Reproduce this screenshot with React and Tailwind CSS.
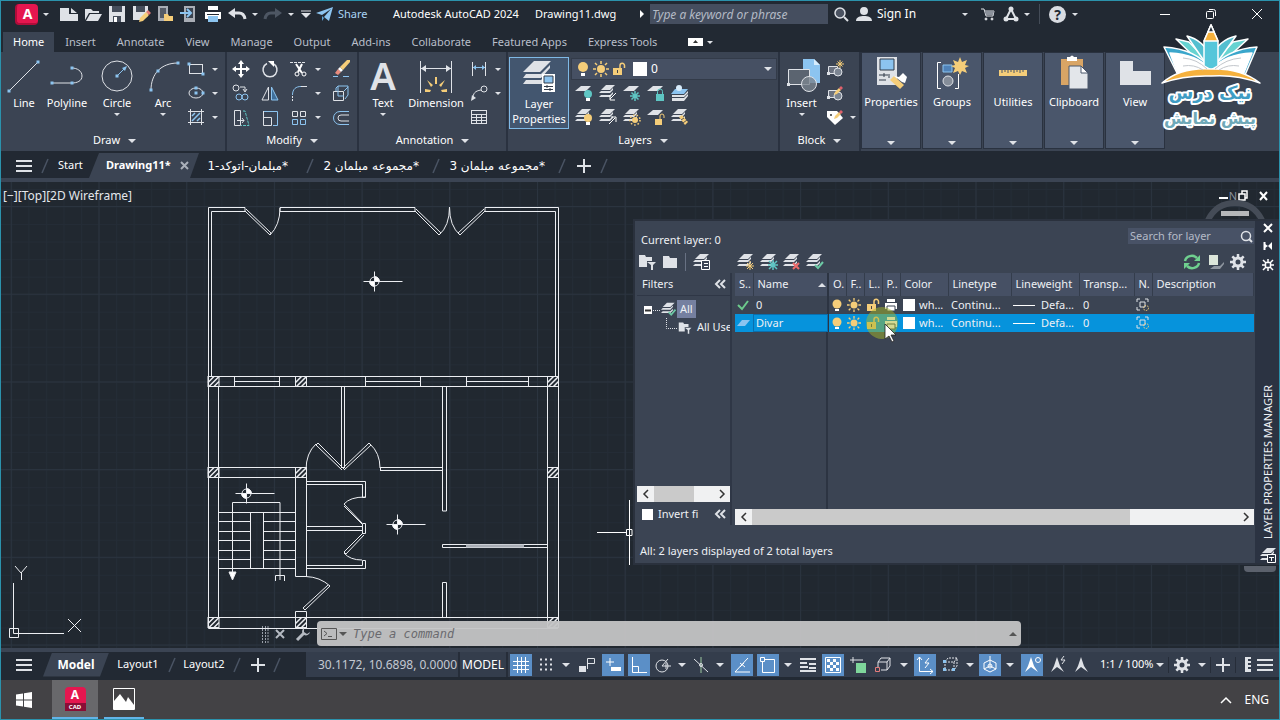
import React, { useState } from "react";

const LIGHT = "#dfe2e7";
const BLUE = "#8cc4f0";
const GOLD = "#f5cd79";
const TEAL = "#5fc6c4";

function Icon({ w = 20, h = w, children, className = "" }) {
  return (
    <svg
      width={w}
      height={h}
      viewBox={`0 0 ${w} ${h}`}
      fill="none"
      stroke={LIGHT}
      className={`shrink-0 ${className}`}
      aria-hidden="true"
    >
      {children}
    </svg>
  );
}

function Caret({ w = 6 }) {
  return (
    <Icon w={w} h={w / 2}>
      <path d={`M0 0H${w}L${w / 2} ${w / 2}Z`} fill={LIGHT} stroke="none" />
    </Icon>
  );
}

function CaretButton({ label, className = "w-3" }) {
  return (
    <button type="button" aria-label={label} className={`flex h-6 items-center justify-center ${className}`}>
      <Caret />
    </button>
  );
}

function AutocadLogo() {
  return (
    <div className="h-[21px] w-[23px] rounded-sm border-b-2 border-l-2 border-[#b00d3a] bg-[#e5164f] text-center text-sm leading-[19px] font-bold text-white">
      A
    </div>
  );
}

/* ---------- title bar ---------- */

const quickIcons = [
  ["New", <path d="M1 4H10V10H19V17H1ZM12 4L18 9H12Z" fill={LIGHT} stroke="none" />],
  ["Open", <path d="M2 5H8L10 7H16V9H6L2 16ZM7 10H19L15 17H3Z" fill={LIGHT} stroke="none" />],
  [
    "Save",
    <g stroke="none">
      <path d="M2 2H18V18H2Z" fill={LIGHT} />
      <path d="M5 2H15V8H5ZM6 12H14V18H6Z" fill="#454d5b" />
      <path d="M7 13H10V18H7Z" fill="#fff" />
    </g>,
  ],
  [
    "Save As",
    <g stroke="none">
      <path d="M2 2H17V12L12 16H2Z" fill={LIGHT} />
      <path d="M5 2H14V8H5Z" fill="#454d5b" />
      <path d="M8 18L9 14L15 8L18 11L12 17Z" fill={GOLD} />
      <path d="M15 8L17 6L20 9L18 11Z" fill="#e07a76" />
    </g>,
  ],
  [
    "Open from Web & Mobile",
    <g stroke="none">
      <path d="M3 2H13V17H3Z" fill="#a9adb5" />
      <path d="M5 4H11V14H5Z" fill="#555b66" />
      <path d="M9 10H13L14 12H18V17H9Z" fill={GOLD} />
    </g>,
  ],
  [
    "Save to Web & Mobile",
    <g>
      <path d="M5 2H16V18H5Z" fill="#a9adb5" stroke="none" />
      <path d="M7 4H14V14H7Z" fill="#39424f" stroke="none" />
      <path d="M1 9H11M8 5L12 9L8 13" stroke={BLUE} strokeWidth="2" />
    </g>,
  ],
  [
    "Plot",
    <g stroke="none">
      <path d="M5 2H15V6H5ZM2 8H18V15H2Z" fill="#fff" />
      <path d="M5 12H15V18H5Z" fill={BLUE} />
      <path d="M4 10H16V11H4Z" fill="#222933" />
    </g>,
  ],
  [
    "Undo",
    <g>
      <path d="M6 9H12Q17 9 18 15" strokeWidth="3" />
      <path d="M1 9L8 4V14Z" fill={LIGHT} stroke="none" />
    </g>,
  ],
];

function TitleBar() {
  return (
    <header className="flex h-[31px] items-center bg-[#222933] pb-[5px] pl-[14px] text-white">
      <AutocadLogo />
      <CaretButton label="Application menu" className="mr-[3px] w-4" />
      {quickIcons.map(([label, art]) => (
        <button key={label} type="button" aria-label={label} className="flex w-6 justify-center">
          <Icon>{art}</Icon>
        </button>
      ))}
      <CaretButton label="Undo list" />
      <button type="button" aria-label="Redo" className="flex w-6 justify-center">
        <Icon>
          <path d="M14 9H8Q3 9 2 15" stroke="#4d5663" strokeWidth="3" />
          <path d="M19 9L12 4V14Z" fill="#4d5663" stroke="none" />
        </Icon>
      </button>
      <CaretButton label="Redo list" />
      <button type="button" aria-label="Customize toolbar" className="flex w-[18px] justify-center">
        <Icon w={10} h={8}>
          <path d="M0 1H10" />
          <path d="M0 3H10L5 8Z" fill={LIGHT} stroke="none" />
        </Icon>
      </button>
      <button type="button" className="flex w-[54px] items-center gap-[3px] text-[#a9d4f5]">
        <Icon>
          <path d="M1 9L18 3L14 17L9 13L16 5L7 11Z" fill={BLUE} stroke="none" />
          <path d="M7 12L9 14L7 17Z" fill="#5da3d6" stroke="none" />
        </Icon>
        Share
      </button>
      <h1 className="ml-6 flex w-[247px] gap-4 whitespace-nowrap">
        <span>Autodesk AutoCAD 2024</span>
        <span>Drawing11.dwg</span>
      </h1>
      <Icon w={5} h={8} className="mr-[5px]">
        <path d="M0 0L4 4L0 8Z" fill="#fff" stroke="none" />
      </Icon>
      <input
        aria-label="Search help"
        placeholder="Type a keyword or phrase"
        className="h-5 w-[178px] bg-[#454e5f] px-[2px] text-xs italic outline-none placeholder:text-[#b4bac5]"
      />
      <button type="button" aria-label="Search" className="ml-[5px]">
        <Icon w={16}>
          <circle cx="7" cy="7" r="5" strokeWidth="1.500" fill="#4a5261" />
          <path d="M11 11L15 15" strokeWidth="2" />
        </Icon>
      </button>
      <button type="button" className="ml-[7px] flex w-[101px] items-center gap-[5px] text-xs">
        <Icon w={16}>
          <path d="M8 1C11 1 12 3 12 5C12 8 10 9 8 9C6 9 4 8 4 5C4 3 5 1 8 1ZM0 15C0 11 4 10 8 10C12 10 16 11 16 15Z" fill={LIGHT} stroke="none" />
        </Icon>
        Sign In
      </button>
      <CaretButton label="Account menu" className="w-4" />
      <button type="button" aria-label="App store" className="ml-2">
        <Icon w={14}>
          <path d="M0 2H3L5 9H12L13 4H4" />
          <path d="M4 4H13L12 8H5Z" fill="#8c929c" stroke="none" />
          <circle cx="5" cy="12" r="1" fill={LIGHT} />
          <circle cx="11" cy="12" r="1" fill={LIGHT} />
        </Icon>
      </button>
      <button type="button" aria-label="Autodesk apps" className="ml-2">
        <Icon w={16}>
          <path d="M8 3L3 13H13Z" strokeWidth="2" />
          <circle cx="8" cy="3" r="2.500" fill={LIGHT} stroke="none" />
          <circle cx="3" cy="13" r="2.500" fill={LIGHT} stroke="none" />
          <circle cx="13" cy="13" r="2.500" fill={LIGHT} stroke="none" />
        </Icon>
      </button>
      <CaretButton label="Apps menu" className="w-4" />
      <div className="mx-1 h-5 border-l border-[#444c58]" />
      <button type="button" aria-label="Help" className="ml-[5px] size-[17px] rounded-full bg-[#d9dce2] text-sm leading-[17px] font-bold text-[#222933]">
        ?
      </button>
      <CaretButton label="Help menu" className="ml-px w-4" />
      <div className="ml-auto flex gap-[34px] pr-4">
        <button type="button" aria-label="Minimize">
          <Icon w={12}><path d="M1 6.500H11" stroke="#fff" /></Icon>
        </button>
        <button type="button" aria-label="Restore">
          <Icon w={12}>
            <rect x="1.500" y="3.500" width="7" height="7" rx="1" stroke="#fff" />
            <path d="M4 1.500H8.500Q10.500 1.500 10.500 3.500V8" stroke="#fff" />
          </Icon>
        </button>
        <button type="button" aria-label="Close">
          <Icon w={12}><path d="M1 1L11 11M11 1L1 11" stroke="#fff" /></Icon>
        </button>
      </div>
    </header>
  );
}

/* ---------- ribbon ---------- */

const ribbonTabs = [
  "Home",
  "Insert",
  "Annotate",
  "View",
  "Manage",
  "Output",
  "Add-ins",
  "Collaborate",
  "Featured Apps",
  "Express Tools",
];

function RibbonTabs() {
  return (
    <nav className="flex h-5 items-center gap-px bg-[#222933] pl-[2px]">
      {ribbonTabs.map((tab, index) => (
        <button
          key={tab}
          type="button"
          className={`h-full px-[10px] whitespace-nowrap ${
            index === 0 ? "bg-[#3b4453] text-white" : "text-[#b9bfca]"
          }`}
        >
          {tab}
        </button>
      ))}
      <button type="button" aria-label="Minimize ribbon" className="ml-5 flex items-center gap-1">
        <Icon w={15} h={8}>
          <path d="M0 0H15V8H0Z" fill="#fff" stroke="none" />
          <path d="M5 5H10L7.500 2Z" fill="#333" stroke="none" />
        </Icon>
        <Caret w={6} />
      </button>
    </nav>
  );
}

function Panel({ title, children, className = "" }) {
  return (
    <section className={`flex shrink-0 flex-col border-r-2 border-[#2a3240] ${className}`}>
      <div className="flex h-[78px] px-px pt-[5px]">{children}</div>
      <button type="button" className="flex h-[21px] items-center justify-center gap-2 text-white">
        {title}
        <Caret w={8} />
      </button>
    </section>
  );
}

function BigButton({ label, art, caret, className }) {
  return (
    <button type="button" className={`flex flex-col items-center text-white ${className}`}>
      <Icon w={38} className="overflow-visible">{art}</Icon>
      <span className="leading-4">{label}</span>
      {caret && (
        <span className="mt-[2px] flex">
          <Caret w={6} />
        </span>
      )}
    </button>
  );
}

function SmallButton({ label, art }) {
  return (
    <button type="button" aria-label={label} className="flex h-6 w-[26px] items-center justify-center">
      <Icon w={18}>{art}</Icon>
    </button>
  );
}

function Dot({ x, y }) {
  return <rect x={x - 1.5} y={y - 1.5} width="3" height="3" fill={BLUE} stroke="none" />;
}

const drawBig = [
  ["Line", "w-[38px]", false, <g><path d="M4 34L33 5" /><Dot x={4} y={34} /><Dot x={33} y={5} /></g>],
  [
    "Polyline",
    "w-12",
    false,
    <g><path d="M4 26H24M24 11C29 11 34 14 34 19C34 24 29 26 24 26" /><Dot x={4} y={26} /><Dot x={24} y={26} /><Dot x={24} y={11} /></g>,
  ],
  [
    "Circle",
    "w-[52px]",
    true,
    <g><circle cx="19" cy="19" r="15" /><path d="M19 19L27 11" stroke={BLUE} /><Dot x={19} y={19} /><path d="M29 9L24 11L27 14Z" fill={BLUE} stroke="none" /></g>,
  ],
  [
    "Arc",
    "w-10",
    true,
    <g><path d="M7 33C7 17 17 6 34 6" /><Dot x={7} y={33} /><Dot x={14} y={14} /><Dot x={34} y={6} /></g>,
  ],
];

const starArt = <path d="M14 0V8M10 4H18M11.500 1.500L16.500 6.500M16.500 1.500L11.500 6.500" stroke={GOLD} />;
const pencilArt = (
  <g stroke="none">
    <path d="M8 11L9 8L13 4L15 6L11 10Z" fill={GOLD} />
    <path d="M13 4L15 2L17 4L15 6Z" fill="#e0606c" />
  </g>
);
const blockArt = (
  <g>
    <path d="M2.500 6.500H11.500V13.500H2.500Z" fill="#6b7280" />
    <circle cx="12" cy="12" r="4" fill="#7c8592" />
    <path d="M1 12H4V15H1Z" fill={LIGHT} stroke="none" />
  </g>
);

const drawSmall = [
  ["Rectangle", <g><rect x="2.500" y="4.500" width="13" height="9" /><Dot x={2} y={4} /><Dot x={16} y={14} /></g>],
  ["Ellipse", <g><ellipse cx="9" cy="9" rx="7" ry="5" /><Dot x={9} y={9} /><Dot x={9} y={4} /><Dot x={16} y={9} /></g>],
  [
    "Hatch",
    <g><path d="M3.500 1V17M14.500 1V17M1 3.500H17M1 14.500H17" /><path d="M5 8L8 5M5 13L13 5M10 13L13 10" stroke={BLUE} strokeWidth="1.500" /></g>,
  ],
];

const modifyTools = [
  ["Move", <g><path d="M9 2V16M2 9H16" strokeWidth="2" stroke="#fff" /><path d="M9 0L12 4H6ZM9 18L12 14H6ZM0 9L4 6V12ZM18 9L14 6V12Z" fill="#fff" stroke="none" /></g>],
  ["Rotate", <g><path d="M12 3.500A7 7 0 1 1 6 3.500" strokeWidth="1.500" /><path d="M7 1H13V7Z" fill="#fff" stroke="none" /></g>],
  ["Trim", <g><path d="M0 2.500H16" strokeDasharray="3 1" /><path d="M6 4L12 13M12 4L8 12" strokeWidth="2" stroke="#fff" /><circle cx="7" cy="14" r="2" stroke="#fff" /><circle cx="14" cy="14" r="2" stroke="#fff" /></g>, true],
  ["Erase", <g><path d="M1 16.500H6M11 16.500H17" stroke={BLUE} /><path d="M3 13L6 9L9 12L6 15Z" fill="#e98c7e" stroke="none" /><path d="M6 9L8 7L11 10L9 12Z" fill="#fff" stroke="none" /><path d="M8 7L15 0H18V2L11 10Z" fill={GOLD} stroke="none" /></g>],
  ["Copy", <g><circle cx="4" cy="4" r="3" /><path d="M8 3H13V7M11 5L13 8L15 5" /><circle cx="7" cy="13" r="3" stroke={BLUE} /><circle cx="13" cy="13" r="3" stroke={BLUE} /></g>],
  ["Mirror", <g><path d="M7.500 3V16H1Z" /><path d="M10.500 3V16H17Z" fill="#3f6f9b" stroke={BLUE} /></g>],
  ["Fillet", <g><path d="M2.500 17V11" strokeDasharray="2 1" /><path d="M2.500 11C2.500 5 6 2.500 11 2.500" stroke={BLUE} /><path d="M11 2.500H17" /></g>, true],
  ["Explode", <g><path d="M1.500 7.500H11.500V16.500H1.500Z" /><path d="M4 7V4L6 2H16V11L13 15M6 2V12H12M12 7L16 3" stroke={BLUE} /></g>],
  ["Stretch", <g><path d="M2.500 1.500H8.500V16.500H2.500ZM5 11.500H12M10 9L12 11.500L10 14" /><path d="M11 2H13L17 16.500H9" stroke={TEAL} strokeDasharray="3 1" /></g>],
  ["Scale", <g><path d="M2 2.500H16.500V16.500H12" stroke={BLUE} /><path d="M2.500 2V16.500H10.500V8.500H2.500" /></g>],
  ["Array", <g><path d="M2.500 2.500H7.500V7.500H2.500ZM10.500 2.500H15.500V7.500H10.500Z" /><path d="M2.500 10.500H7.500V15.500H2.500ZM10.500 10.500H15.500V15.500H10.500Z" stroke={BLUE} /></g>, true],
  ["Offset", <g><path d="M17 2.500H8A6.500 6.500 0 0 0 8 15.500H17" stroke={BLUE} /><path d="M17 6H9A3 3 0 0 0 9 12H17" /></g>],
];

const annotationSmall = [
  ["Linear", <g><path d="M2.500 2V16M15.500 2V16" /><path d="M3 7.500H15" stroke={BLUE} /><path d="M3 7.500L6 5V10ZM15 7.500L12 5V10Z" fill={BLUE} stroke="none" /></g>, true],
  ["Leader", <g><path d="M3 15C3 9 5 7 11 6" /><circle cx="14" cy="5" r="3" /><path d="M1 17L2 11L6 14Z" fill={LIGHT} stroke="none" /></g>, true],
  ["Table", <g><rect x="1.500" y="2.500" width="15" height="13" /><path d="M1 6.500H17M1 9.500H17M1 12.500H17M6.500 6V16M11.500 6V16" /></g>],
];

function stack(color = LIGHT) {
  return (
    <g fill={color} stroke="none">
      <path d="M7 1H16L11 6H2Z" />
      <path d="M2 7H11L14 4V6L11 9H0ZM2 11H11L14 8V10L11 13H0Z" />
    </g>
  );
}

const sheet = <path d="M6 2H16L11 7H0Z" fill={LIGHT} stroke="none" />;
const bulb = (color) => (
  <g stroke="none">
    <circle cx="13" cy="10" r="4" fill={color} />
    <path d="M11 14H15V17H11Z" fill="#fff" />
  </g>
);

const layerTools = [
  ["Off", <g>{sheet}{bulb(TEAL)}</g>],
  ["Isolate", <g>{stack()}<path d="M17 9L11 15M11 11V16H16" stroke="#fff" /></g>],
  ["Freeze", <g>{sheet}<path d="M12 7V17M7 12H17M8.500 8.500L15.500 15.500M15.500 8.500L8.500 15.500" stroke={TEAL} strokeWidth="1.500" /></g>],
  ["Lock", <g>{sheet}<path d="M9 10H17V17H9Z" fill={TEAL} stroke="none" /><path d="M10.500 10V7.500A2.500 2.500 0 0 1 15.500 7.500V10" stroke={TEAL} /></g>],
  ["Make Current", <g stroke="none"><path d="M4 5H17L13 10H0Z" fill={BLUE} /><path d="M1 11H13L17 7V9L13 13H1ZM1 14H13L17 10V12L13 17H1Z" fill={LIGHT} /><circle cx="8" cy="4" r="3" fill="#d8ecfb" /></g>],
  ["Turn All On", <g>{stack()}{bulb(GOLD)}</g>],
  ["Unisolate", <g>{stack()}<path d="M10 16L16 10M12 9H17V14" stroke="#fff" /></g>],
  ["Thaw All", <g>{stack()}<circle cx="12" cy="12" r="3" fill={GOLD} stroke="none" /><circle cx="12" cy="12" r="5" stroke={GOLD} strokeDasharray="1.500 2" strokeWidth="1.500" /></g>],
  ["Unlock", <g>{sheet}<path d="M8 11H15V17H8Z" fill={GOLD} stroke="none" /><path d="M13 11V8A2 2 0 0 1 17 8V10" stroke={GOLD} /></g>],
  ["Match Layer", <g>{stack()}<path d="M8 9L11 7L17 14L14 17Z" fill={GOLD} stroke="none" /><path d="M10 12L13 10M12 15L16 12" stroke="#555" /></g>],
];

const blockSmall = [
  ["Create", <g>{blockArt}{starArt}</g>],
  ["Edit", <g>{blockArt}{pencilArt}</g>],
  ["Edit Attributes", <g><path d="M1 3H11L17 10L9 17L1 9Z" fill="#fff" stroke="none" /><circle cx="5" cy="7" r="1" fill="#333" stroke="none" />{pencilArt}</g>, true],
];

const collapsedPanels = [
  [
    "Properties",
    <g stroke="none">
      <path d="M5 3H25V31H5Z" fill={LIGHT} />
      <path d="M8 5H22V16H8Z" fill={BLUE} stroke="#333c4a" />
      <path d="M7 21H16M7 26H14M12 19V23M17 20V24" stroke="#333c4a" />
      <path d="M18 26L22 22L32 31L28 35Z" fill={GOLD} />
      <path d="M22 22L27 23L31 19L35 23L33 29L30 28Z" fill="#fff" />
    </g>,
  ],
  [
    "Groups",
    <g>
      <path d="M8 8.500H4.500V34.500H8M22 34.500H25.500V20" stroke="#fff" />
      <path d="M10 11H19V18H10Z" fill="#4f82b8" stroke={BLUE} />
      <circle cx="15" cy="27" r="5" fill="#858d99" />
      <path d="M27 3L29 8L34 6L32 11L36 12L32 14L34 19L29 17L27 21L25 17L20 19L22 14L18 12L22 11L20 6L25 8Z" fill={GOLD} stroke="none" />
    </g>,
  ],
  [
    "Utilities",
    <g stroke="none">
      <path d="M5 16H33V22H5Z" fill={GOLD} />
      <path d="M8 16V19M11 16V18M14 16V19M17 16V18M20 16V19M23 16V18M26 16V19M29 16V18" stroke="#4a566b" />
    </g>,
  ],
  [
    "Clipboard",
    <g stroke="none">
      <path d="M6 5H28V31H6Z" fill="#d9a565" />
      <path d="M12 3H15Q17 0 19 3H22V7H12Z" fill="#fff" />
      <path d="M14 12H26L33 19V35H14Z" fill="#e3e6ea" stroke="#4a566b" />
      <path d="M26 12V19H33Z" fill="#fff" stroke="#4a566b" />
    </g>,
  ],
  ["View", <path d="M4 7H17V17H35V31H4Z" fill={LIGHT} stroke="none" />],
];

function Ribbon() {
  return (
    <div className="flex h-[99px] bg-[#3b4453] pl-[3px]">
      <Panel title="Draw" className="w-[223px]">
        {drawBig.map(([label, width, caret, art]) => (
          <BigButton key={label} label={label} art={art} caret={caret} className={width} />
        ))}
        <div>
          {drawSmall.map(([label, art]) => (
            <div key={label} className="flex">
              <SmallButton label={label} art={art} />
              <CaretButton label={`${label} options`} />
            </div>
          ))}
        </div>
      </Panel>

      <Panel title="Modify" className="w-[132px]">
        <div className="grid grid-cols-[29px_29px_42px_26px]">
          {modifyTools.map(([label, art, caret]) => (
            <div key={label} className="flex">
              <SmallButton label={label} art={art} />
              {caret && <CaretButton label={`${label} options`} />}
            </div>
          ))}
        </div>
      </Panel>

      <Panel title="Annotation" className="w-[149px]">
        <BigButton
          label="Text"
          caret
          className="w-[46px]"
          art={
            <text x="19" y="33" textAnchor="middle" fontSize="38" fontWeight="600" fill={LIGHT} stroke="none">
              A
            </text>
          }
        />
        <BigButton
          label="Dimension"
          className="w-[60px]"
          art={
            <g>
              <path d="M3.500 4V36M34.500 4V36M4 11.500H34" />
              <path d="M4 11.500L9 8V15ZM34 11.500L29 8V15Z" fill={LIGHT} stroke="none" />
              <path d="M8 32L14 33L13 35H8ZM30 32L24 33L25 35H30ZM10 23L16 28L14 30ZM28 23L22 28L24 30ZM18 20H20V27H18Z" fill={GOLD} stroke="none" />
            </g>
          }
        />
        <div>
          {annotationSmall.map(([label, art, caret]) => (
            <div key={label} className="flex">
              <SmallButton label={label} art={art} />
              {caret && <CaretButton label={`${label} options`} />}
            </div>
          ))}
        </div>
      </Panel>

      <Panel title="Layers" className="w-[272px]">
        <button
          type="button"
          className="flex h-[72px] w-[60px] shrink-0 flex-col items-center border border-[#7fb9e6] bg-[#43566f] text-white"
        >
          <Icon w={38}>
            <g stroke="none" fill={LIGHT}>
              <path d="M14 3H31L20 14H3Z" />
              <path d="M6 16H21L30 7V10L21 20H3ZM6 22H21L24 19V26H3Z" />
            </g>
            <path d="M22 16H35V34H22Z" fill="#fff" stroke="none" />
            <path d="M24 18H33V25H24Z" fill={BLUE} stroke="#333c4a" />
            <path d="M24 28.500H33M24 31.500H33M27 27V30M30 30V33" stroke="#333c4a" />
          </Icon>
          <span className="leading-[15px]">Layer</span>
          <span className="leading-[15px]">Properties</span>
        </button>
        <div className="ml-[2px] flex-1">
          <div className="mt-px mb-px flex h-[22px] items-center gap-[3px] border border-[#333b49] bg-[#465063] px-1">
            <Icon w={14} h={16}>
              <circle cx="7" cy="6" r="5" fill={GOLD} stroke="none" />
              <path d="M5 12H9V15H5Z" fill="#fff" stroke="none" />
            </Icon>
            <Sun size={16} />
            <OpenLock />
            <span className="ml-1 size-[14px] bg-white" />
            <select aria-label="Layer" className="flex-1 appearance-none bg-transparent pl-px text-xs text-white outline-none">
              <option>0</option>
              <option>Divar</option>
            </select>
            <Caret w={8} />
          </div>
          <div className="grid w-[122px] grid-cols-[repeat(5,24px)]">
            {layerTools.map(([label, art]) => (
              <SmallButton key={label} label={label} art={art} />
            ))}
          </div>
        </div>
      </Panel>

      <Panel title="Block" className="w-[81px]">
        <BigButton
          label="Insert"
          caret
          className="w-[42px]"
          art={
            <g>
              <path d="M20 2H31L37 8V26H20Z" fill={BLUE} stroke="none" />
              <path d="M31 2V8H37Z" fill="#d7ecfc" stroke="none" />
              <path d="M5.500 12.500H26.500V27.500H5.500Z" fill="#5b6470" />
              <circle cx="26" cy="27" r="7.500" fill="#7b858fcc" />
              <path d="M4 26H7V29H4Z" fill={LIGHT} stroke="none" />
            </g>
          }
        />
        <div>
          {blockSmall.map(([label, art, caret]) => (
            <div key={label} className="flex">
              <SmallButton label={label} art={art} />
              {caret && <CaretButton label={`${label} options`} className="w-[10px]" />}
            </div>
          ))}
        </div>
      </Panel>

      {collapsedPanels.map(([label, art]) => (
        <button
          key={label}
          type="button"
          className="mr-px flex h-[97px] w-[60px] shrink-0 flex-col items-center border border-[#2a3240] bg-[#4a566b] pt-px text-white"
        >
          <Icon w={38}>{art}</Icon>
          <span className="leading-5">{label}</span>
          <span className="mt-auto mb-[3px] flex">
            <Caret w={8} />
          </span>
        </button>
      ))}
    </div>
  );
}

/* ---------- file tabs ---------- */

function Hamburger({ label }) {
  return (
    <button type="button" aria-label={label}>
      <Icon w={18} h={14}>
        <path d="M1 2H17M1 7H17M1 12H17" strokeWidth="2" />
      </Icon>
    </button>
  );
}

function Slash() {
  return (
    <Icon w={10} h={16}>
      <path d="M1 15L7 1" stroke="#4a5464" strokeWidth="1.500" />
    </Icon>
  );
}

function PlusButton({ label }) {
  return (
    <button type="button" aria-label={label}>
      <Icon w={16}>
        <path d="M8 1V15M1 8H15" strokeWidth="2" />
      </Icon>
    </button>
  );
}

const otherFiles = ["*مبلمان-اتوکد-1", "*مجموعه مبلمان 2", "*مجموعه مبلمان 3"];

function FileTabs() {
  return (
    <nav className="flex h-[31px] items-center border-b-4 border-[#3b4453] bg-[#222933] pt-[2px] pl-[14px] text-white">
      <Hamburger label="File tab menu" />
      <div className="ml-2">
        <Slash />
      </div>
      <button type="button" className="ml-[7px] w-[31px] text-left">Start</button>
      <div className="flex h-full items-center gap-2 bg-[#3b4453] pr-[10px] pl-[17px] [clip-path:polygon(10px_0,100%_0,calc(100%_-_9px)_100%,0_100%)]">
        <button type="button" className="w-[66px] text-left font-bold">Drawing11*</button>
        <button type="button" aria-label="Close Drawing11">
          <Icon w={9}>
            <path d="M1 1L8 8M8 1L1 8" strokeWidth="2" stroke="#aab0ba" />
          </Icon>
        </button>
      </div>
      {otherFiles.map((file, index) => (
        <React.Fragment key={file}>
          <button
            type="button"
            dir="rtl"
            className={`text-right font-['DejaVu_Sans',sans-serif] text-xs whitespace-nowrap ${
              index === 0 ? "mr-[18px] ml-[9px] w-[80px]" : "mr-[13px] ml-[6px] w-[97px]"
            }`}
          >
            {file}
          </button>
          <Slash />
        </React.Fragment>
      ))}
      <div className="ml-2 flex items-center gap-2">
        <PlusButton label="New drawing" />
        <Slash />
      </div>
    </nav>
  );
}

/* ---------- drawing ---------- */

function Column({ x, y }) {
  return (
    <g>
      <rect x={x} y={y} width="11" height="10" />
      <path d={`M${x} ${y + 6}l6 -6M${x + 1} ${y + 10}l10 -10M${x + 6} ${y + 10}l5 -5`} strokeWidth="1.500" />
    </g>
  );
}

function LevelMark({ x, y }) {
  return (
    <g>
      <path d={`M${x - 11} ${y}h39M${x} ${y - 10}v20`} />
      <circle cx={x} cy={y} r="4.500" fill="#212830" />
      <path d={`M${x} ${y}v-5a5 5 0 0 1 5 5zM${x} ${y}v5a5 5 0 0 1 -5 -5z`} fill="#fff" />
    </g>
  );
}

const stairRows = [521.5, 531.5, 540.5, 550.5, 559.5];

function FloorPlan() {
  return (
    <svg className="absolute inset-0 size-full" fill="none" stroke="#eceef2" aria-label="Floor plan" role="img">
      <defs>
        <pattern id="minor" width="17.54" height="17.54" patternUnits="userSpaceOnUse" x="98.5" y="206.5">
          <path d="M0 .5H18M.5 0V18" stroke="#242c36" />
        </pattern>
        <pattern id="major" width="87.7" height="87.7" patternUnits="userSpaceOnUse" x="98.5" y="206">
          <path d="M0 .5H88M.5 0V88" stroke="#2b343f" />
        </pattern>
      </defs>
      <g transform="translate(-1 -182)">
        <rect x="0" y="180" width="4000" height="3000" fill="url(#minor)" stroke="none" />
        <rect x="0" y="180" width="4000" height="3000" fill="url(#major)" stroke="none" />

        {/* yard walls and gates */}
        <path d="M208.500 376V207.500H245V211.500H211.500V376" />
        <path d="M280 207.500H415V211.500H280ZM485 211.500V207.500H558.500V628M485 211.500H555.500V376" />
        <path d="M245 211L270 235L271 233L246 209M270 235Q280 225 280 208" />
        <path d="M415 211L439 235L441 233L416 209M439 235Q449.500 226 449.500 207" />
        <path d="M485 211L460 235L458 233L484 209M460 235Q449.500 226 449.500 207" />

        {/* outer walls */}
        <path d="M208 376.500H558M218.500 386.500H547.500M208.500 376V628.500H558M218.500 386V617.500M547.500 386V617.500M208 617.500H558" />
        <path d="M234.500 376V386M279.500 376V386M234 381.500H279M365.500 376V386M420.500 376V386M365 381.500H420M466.500 376V386M528.500 376V386M466 381.500H528" />

        {/* rooms */}
        <path d="M341.500 386V468M344.500 386V468M442.500 386V511H446.500V386M380 467.500H442M380 470.500H442M380.500 467V471" />
        <path d="M342 470L316 445L318 443L344 469M316 444Q306 453 306 470" />
        <path d="M344 470L371 445L369 443L343 468M370 444Q380 453 380 468" />
        <path d="M218 467.500H296M218 477.500H296M295.500 477V576.500H306.500V467" />
        <path d="M306 481.500H365.500V497.500H362.500V484.500H306M365 497Q350 497 344 504L362 523M344 506L363 525" />
        <path d="M362.500 523.500H365.500V533.500H362.500ZM306 526.500H362M306 530.500H362M363 533L344 552L346 554L364 535M344 553Q350 560 362 560" />
        <path d="M306 565.500H362.500V560.500H365.500V568.500H306" />
        <path d="M442.500 544.500H547.500V547.500H442.500ZM442.500 617V582.500H446.500V617" />
        <path d="M466 546H524" stroke="#a8adb5" strokeWidth="3" />
        <path d="M306 576.500Q320 577 330 586L305 610L303 608L328 585M295.500 628V611.500H306.500V628" />

        {/* stairs */}
        <path d="M218 512.500H296M218 568.500H296M250.500 512V568M263.500 512V568" />
        {stairRows.map((y) => (
          <path key={y} d={`M218 ${y}H250M264 ${y}H296`} />
        ))}
        <path d="M232.500 574V502.500H280V580M275.500 581V575.500H284.500V581" />
        <path d="M229 572H236L232.500 580Z" fill="#fff" />

        <Column x={208} y={376.5} />
        <Column x={295.5} y={376.5} />
        <Column x={547.5} y={376.5} />
        <Column x={208} y={467.5} />
        <Column x={295.5} y={467.5} />
        <Column x={547.5} y={467.5} />
        <Column x={208} y={617.5} />
        <Column x={295.5} y={617.5} />
        <Column x={547.5} y={617.5} />
        <LevelMark x={374.5} y={281.5} />
        <LevelMark x={246.5} y={493.5} />
        <LevelMark x={397.5} y={524.5} />

        {/* crosshair */}
        <path d="M597 532.500H626M629.500 500V565M626.500 529.500H632V535.500H626.500Z" stroke="#fff" />

        {/* ucs icon */}
        <path d="M13.500 583V633.500H64M9.500 628.500H18.500V637.500H9.500Z" />
        <path d="M15 566L21 573L27 566M21.500 573V580M68 619L81 632M81 619L68 632" />
      </g>
    </svg>
  );
}

/* ---------- layer palette ---------- */

function Sun({ size = 14 }) {
  return (
    <svg width={size} height={size} viewBox="0 0 16 16" className="shrink-0" aria-hidden="true">
      <circle cx="8" cy="8" r="4" fill={GOLD} />
      <path d="M8 0V3M8 13V16M0 8H3M13 8H16M2 2L4 4M12 12L14 14M14 2L12 4M2 14L4 12" stroke={GOLD} strokeWidth="1.500" />
    </svg>
  );
}

function OpenLock() {
  return (
    <Icon w={14}>
      <path d="M1 6H10V13H1Z" fill={GOLD} stroke="none" />
      <path d="M8 6V3.500A2.200 2.200 0 0 1 12.500 3.500V6" stroke={GOLD} strokeWidth="1.500" />
      <path d="M5 8H6V11H5Z" fill="#444" stroke="none" />
    </Icon>
  );
}

const headers = ["S..", "Name", "O.", "F..", "L..", "P..", "Color", "Linetype", "Lineweight", "Transp...", "N.", "Description"];
const columnWidths = [
  "w-[18px]",
  "w-[75px]",
  "w-[18px]",
  "w-[18px]",
  "w-[18px]",
  "w-[18px]",
  "w-12",
  "w-[63px]",
  "w-[68px]",
  "w-[55px]",
  "w-[18px]",
  "",
];

const layers = [
  { name: "0", current: true },
  { name: "Divar", current: false },
];

function LayerRow({ layer, selected, onSelect }) {
  return (
    <tr onClick={onSelect} className={`h-[18px] ${selected ? "bg-[#0693dc]" : ""}`}>
      <td>
        <Icon w={16} h={12}>
          {layer.current ? (
            <path d="M3 6L7 10L13 2" stroke="#6ccb8c" strokeWidth="2" />
          ) : (
            <path d="M7 3H15L10 9H2Z" fill={BLUE} stroke="none" />
          )}
        </Icon>
      </td>
      <td className={`border-r-2 border-r-[#2c3442] pl-[3px] ${selected ? "outline -outline-offset-1 outline-[#0a6fae]" : ""}`}>
        {layer.name}
      </td>
      <td>
        <Icon w={16} h={14}>
          <circle cx="8" cy="6" r="4.500" fill={GOLD} stroke="none" />
          <path d="M6 11H10V13H6Z" fill="#fff" stroke="none" />
        </Icon>
      </td>
      <td className="pl-px"><Sun /></td>
      <td className="pl-[2px]"><OpenLock /></td>
      <td className="pl-[2px]">
        <Icon w={14}>
          <path d="M3 1H11V4H3ZM1 5H13V11H1Z" fill="#fff" stroke="none" />
          <path d="M3 8H11V13H3Z" fill="#fff" stroke="#3b4453" />
        </Icon>
      </td>
      <td>
        <div className="flex items-center gap-1 pl-[3px]">
          <span className="size-3 bg-white" />
          wh...
        </div>
      </td>
      <td className="pl-[3px] text-nowrap">Continu...</td>
      <td>
        <div className="flex items-center gap-[6px] pl-[2px]">
          <span className="w-[22px] border-t border-white" />
          Defa...
        </div>
      </td>
      <td className="pl-1">0</td>
      <td className="pl-[2px]">
        <Icon w={14}>
          <path d="M1 4V1H4M9 1H12V4M1 9V12H4M4 4H9V9H4Z" />
          <circle cx="10" cy="10" r="2.500" stroke={GOLD} strokeDasharray="1.500 1" />
        </Icon>
      </td>
      <td />
    </tr>
  );
}

function LayerTable() {
  const [selected, setSelected] = useState("Divar");

  return (
    <div className="flex flex-1 flex-col">
      <table className="w-full table-fixed border-collapse text-left">
        <thead>
          <tr className="h-[23px] bg-[#465064]">
            {headers.map((header, index) => (
              <th
                key={header}
                className={`overflow-hidden pl-1 font-normal whitespace-nowrap ${columnWidths[index]} ${
                  index === 1 ? "border-r-2 border-[#2c3442]" : "border-r border-[#343d4c]"
                }`}
              >
                {index === 1 ? (
                  <span className="flex items-center justify-between pr-px">
                    {header}
                    <Icon w={8} h={4}><path d="M0 4H8L4 0Z" fill={LIGHT} stroke="none" /></Icon>
                  </span>
                ) : (
                  header
                )}
              </th>
            ))}
          </tr>
        </thead>
        <tbody>
          {layers.map((layer) => (
            <LayerRow
              key={layer.name}
              layer={layer}
              selected={selected === layer.name}
              onSelect={() => setSelected(layer.name)}
            />
          ))}
        </tbody>
      </table>
      <div className="w-[93px] flex-1 border-r-2 border-[#2c3442]" />
    </div>
  );
}

function ScrollBar({ thumb }) {
  return (
    <div className="flex h-4 items-stretch bg-[#f0f1f2] text-[#333]">
      <button type="button" aria-label="Scroll left" className="flex w-[17px] items-center justify-center">
        <Icon w={8} h={10}><path d="M6 1L2 5L6 9" stroke="#333" strokeWidth="1.500" /></Icon>
      </button>
      <div className="flex-1">
        <div className={`h-full bg-[#cacaca] ${thumb}`} />
      </div>
      <button type="button" aria-label="Scroll right" className="flex w-[17px] items-center justify-center">
        <Icon w={8} h={10}><path d="M2 1L6 5L2 9" stroke="#333" strokeWidth="1.500" /></Icon>
      </button>
    </div>
  );
}

function Chevrons() {
  return (
    <Icon w={12} h={10}>
      <path d="M6 1L2 5L6 9M11 1L7 5L11 9" strokeWidth="2" />
    </Icon>
  );
}

function PaletteButton({ label, children }) {
  return (
    <button type="button" aria-label={label} className="flex w-[23px] justify-center">
      <Icon w={18}>{children}</Icon>
    </button>
  );
}

function Gear({ size = 16 }) {
  return (
    <svg width={size} height={size} viewBox="0 0 16 16" className="shrink-0" fill="none" stroke={LIGHT} aria-hidden="true">
      <circle cx="8" cy="8" r="4" strokeWidth="3" />
      <path d="M8 0V3M8 13V16M0 8H3M13 8H16M2.300 2.300L4.500 4.500M11.500 11.500L13.700 13.700M13.700 2.300L11.500 4.500M2.300 13.700L4.500 11.500" strokeWidth="2.500" />
    </svg>
  );
}

const filterGlyph = (
  <g fill={LIGHT} stroke="none">
    <path d="M1 2H7L8 4H14V8H9V14H1Z" />
    <path d="M9 9H18L15 12V17H13V12Z" />
  </g>
);

function LayerPalette() {
  return (
    <aside className="absolute top-[37px] right-0 left-[632px] flex h-[346px] border-2 border-r-0 border-[#2a313d] bg-[#3b4453] text-[#eef0f4]">
      <div className="flex min-w-0 flex-1 flex-col pr-px">
        <div className="flex h-[30px] items-end justify-between pb-[2px] pl-[6px]">
          <span className="leading-[18px]">Current layer: 0</span>
          <label className="mb-[5px] flex h-4 w-[126px] items-center bg-[#485266] pr-px">
            <input
              aria-label="Search for layer"
              placeholder="Search for layer"
              className="min-w-0 flex-1 bg-transparent pl-[2px] outline-none placeholder:text-[#b4bac6]"
            />
            <Icon w={13}>
              <circle cx="6" cy="6" r="4.500" strokeWidth="1.500" />
              <path d="M9 9L12 12" strokeWidth="2" />
            </Icon>
          </label>
        </div>

        <div className="flex h-[22px] items-center">
          <PaletteButton label="New property filter">{filterGlyph}</PaletteButton>
          <PaletteButton label="New group filter">
            <path d="M2 3H8L9 5H16V15H2Z" fill={LIGHT} stroke="none" />
          </PaletteButton>
          <div className="mx-1 h-[18px] border-l border-[#687183]" />
          <PaletteButton label="Layer states manager">
            {stack()}
            <path d="M8.500 7.500H16.500V16.500H8.500Z" fill="#3b4453" stroke="#fff" />
            <path d="M11 10.500H15M11 13.500H15" stroke="#fff" />
          </PaletteButton>
          <div className="ml-[21px] flex">
            <PaletteButton label="New layer">
              {stack()}
              <path d="M13 8V17M9 13H17M10 10L16 16M16 10L10 16" stroke={GOLD} />
            </PaletteButton>
            <PaletteButton label="New frozen layer">
              {stack()}
              <path d="M13 7V17M8 12H18M9 8L17 16M17 8L9 16" stroke={TEAL} strokeWidth="1.500" />
            </PaletteButton>
            <PaletteButton label="Delete layer">
              {stack()}
              <path d="M10 10L16 16M16 10L10 16" stroke="#ee6a6a" strokeWidth="2" />
            </PaletteButton>
            <PaletteButton label="Set current">
              {stack()}
              <path d="M9 12L12 15L17 9" stroke="#6cc9a5" strokeWidth="2" />
            </PaletteButton>
          </div>
          <div className="ml-auto flex pr-[5px]">
            <PaletteButton label="Refresh">
              <path d="M2 8C3 3 10 1 14 5M16 10C15 15 8 17 4 13" stroke="#6fd08f" strokeWidth="2.500" />
              <path d="M17 2V8H11ZM1 16V10H7Z" fill="#6fd08f" stroke="none" />
            </PaletteButton>
            <PaletteButton label="Toggle override highlight">
              <path d="M3 2H12V12H3Z" fill="#dce6da" stroke="none" />
              <path d="M8 13H14L18 9V11L14 16H4Z" fill="#8e959f" stroke="none" />
            </PaletteButton>
            <button type="button" aria-label="Settings" className="flex w-[23px] items-center justify-center">
              <Gear />
            </button>
          </div>
        </div>

        <div className="flex h-[252px] gap-[3px]">
          <div className="flex w-[97px] flex-col border-r-2 border-[#2f3746] pl-[2px]">
            <div className="flex h-[23px] items-center justify-between border-b border-[#2f3746] pr-1 pl-[5px]">
              Filters
              <button type="button" aria-label="Collapse filters"><Chevrons /></button>
            </div>
            <div className="flex flex-1 flex-col overflow-hidden pt-1 pl-[6px]">
              <div className="flex h-[18px] items-center">
                <Icon w={34} h={18}>
                  <path d="M1 6H9V14H1Z" fill="#fff" stroke="none" />
                  <path d="M2 10.500H8" stroke="#333" strokeWidth="2" />
                  <path d="M10 10.500H17" strokeDasharray="1 1" />
                  <g transform="translate(18 2) scale(.85)">
                    {stack()}
                    <path d="M9 12L12 15L17 9" stroke="#6cc9a5" strokeWidth="2" />
                  </g>
                </Icon>
                <span className="bg-[#7580a0] px-[3px] leading-[18px]">All</span>
              </div>
              <div className="flex h-[18px] items-center whitespace-nowrap">
                <Icon w={50} h={18}>
                  <path d="M23.500 0V10.500H34" strokeDasharray="1 1" />
                  <g transform="translate(35 3) scale(.75)">{filterGlyph}</g>
                </Icon>
                <span className="pl-1">All Use</span>
              </div>
            </div>
            <ScrollBar thumb="w-[68%]" />
            <div className="flex h-[23px] items-center justify-between pt-px pr-1 pl-[5px]">
              <label className="flex items-center gap-[5px] whitespace-nowrap">
                <input type="checkbox" className="size-[11px] appearance-none bg-white checked:bg-[#0693dc]" />
                Invert fi
              </label>
              <button type="button" aria-label="Collapse"><Chevrons /></button>
            </div>
          </div>
          <div className="flex min-w-0 flex-1 flex-col">
            <LayerTable />
            <ScrollBar thumb="w-[78%]" />
          </div>
        </div>
        <p className="mt-4 pl-[5px] leading-5">All: 2 layers displayed of 2 total layers</p>
      </div>

      <div className="flex w-6 flex-col items-center gap-2 bg-[#2b3342] pt-[2px] pl-[2px]">
        <button type="button" aria-label="Close palette">
          <Icon w={10}><path d="M1 1L9 9M9 1L1 9" stroke="#fff" strokeWidth="2" /></Icon>
        </button>
        <button type="button" aria-label="Auto-hide">
          <Icon w={10}>
            <path d="M1.500 1V9" stroke="#fff" strokeWidth="2" />
            <path d="M2 3L5 5L2 7ZM9 1V9L5 5Z" fill="#fff" stroke="none" />
          </Icon>
        </button>
        <button type="button" aria-label="Palette properties">
          <Icon w={12}><path d="M3.500 3.500H8.500V8.500H3.500ZM1 1L3 3M11 1L9 3M1 11L3 9M11 11L9 9M6 0V3M6 9V12M0 6H3M9 6H12" stroke="#fff" strokeWidth="1.500" /></Icon>
        </button>
        <h2 className="mt-auto rotate-180 leading-4 [writing-mode:vertical-rl]">LAYER PROPERTIES MANAGER</h2>
        <Icon w={16}>
          {stack()}
          <path d="M7.500 7.500H15.500V15.500H7.500Z" fill="#2b3342" stroke="#fff" />
          <path d="M9 10.500H14M11.500 10V14" stroke="#fff" />
        </Icon>
      </div>
    </aside>
  );
}

function Cursor() {
  return (
    <svg width="34" height="36" viewBox="0 0 34 36" className="pointer-events-none absolute top-[125px] left-[864px]" aria-hidden="true">
      <circle cx="17" cy="16" r="16" fill="#a5b52a" fillOpacity=".5" />
      <path d="M20 17V32L24 29L27 35L29 34L26 28H31Z" fill="#fff" stroke="#222" strokeWidth=".8" />
    </svg>
  );
}

/* ---------- viewport ---------- */

function CommandLine() {
  return (
    <div className="absolute right-[258px] bottom-[2px] left-[258px] flex h-[25px] items-center">
      <Icon w={10} h={18}>
        <path d="M3.500 1V18M6.500 1V18M9 1V18" strokeDasharray="2 1" stroke="#9aa0aa" />
      </Icon>
      <button type="button" aria-label="Close command line" className="ml-[6px]">
        <Icon w={10}><path d="M1 1L9 9M9 1L1 9" strokeWidth="2" stroke="#b5bac2" /></Icon>
      </button>
      <button type="button" aria-label="Customize" className="mr-[6px] ml-[10px]">
        <Icon w={16}>
          <path d="M2 14L9 7" strokeWidth="3" stroke="#b5bac2" />
          <path d="M9 2A4 4 0 1 0 15 6L12 8L9 6Z" fill="#b5bac2" stroke="none" />
        </Icon>
      </button>
      <div className="flex h-full flex-1 items-center rounded-sm bg-[#c4c4c5]/95 pr-1 pl-1">
        <Icon w={26} h={12}>
          <path d="M.5 .5H15.500V11.500H.5ZM3 3L6 5.500L3 8M7 8.500H11" stroke="#555" />
          <path d="M18 4H26L22 8Z" fill="#555" stroke="none" />
        </Icon>
        <input
          aria-label="Command"
          placeholder="Type a command"
          className="min-w-0 flex-1 bg-transparent pl-[6px] font-['DejaVu_Sans_Mono',monospace] text-xs italic outline-none placeholder:text-[#6a6a6e]"
        />
        <Icon w={8} h={4}><path d="M0 4H8L4 0Z" fill="#555" stroke="none" /></Icon>
      </div>
    </div>
  );
}

function Viewport() {
  return (
    <main className="relative min-h-[465px] flex-1 overflow-hidden bg-[#212830]">
      <FloorPlan />
      <div className="relative flex justify-between pt-[6px] pr-[11px] pl-[2px] leading-4 text-[#e4e7ec]">
        <span className="text-xs">[−][Top][2D Wireframe]</span>
        <div className="flex items-center">
          <Icon w={9} h={12}><path d="M0 8H9" stroke="#fff" strokeWidth="2" /></Icon>
          <span className="w-[10px] text-center text-[11px] text-[#8a919c]">N</span>
          <Icon w={10} h={12}><path d="M1 4H7V10H1ZM4 4V1H9V8H7" stroke="#fff" strokeWidth="1.500" /></Icon>
          <Icon w={20} h={12}><path d="M12 2L19 10M19 2L12 10" stroke="#fff" strokeWidth="2" /></Icon>
        </div>
      </div>
      <svg width="64" height="24" className="absolute top-[16px] right-[12px]" fill="none" aria-hidden="true">
        <path d="M5 22C12 8 22 5 32 5S52 8 59 22" stroke="#454c57" strokeWidth="6" />
        <path d="M18 13H46V18H18Z" fill="#b5b7ba" />
      </svg>
      <div className="absolute top-[384px] right-[3px] h-[6px] w-8 rounded-b bg-[#5b616c]" />
      <LayerPalette />
      <Cursor />
      <CommandLine />
    </main>
  );
}

/* ---------- status bar ---------- */

const W = { a: "w-[22px]", b: "w-6", c: "w-[26px]", d: "w-7" };

const statusItems = [
  ["Grid", "c", true, <path d="M6.500 2V18M10.500 2V18M14.500 2V18M2 6.500H18M2 10.500H18M2 14.500H18" />],
  ["Snap", "b", false, <path d="M4 4.500H18M4 9.500H18M4 14.500H18" strokeWidth="2" strokeDasharray="2 3" />, true],
  ["Infer constraints", "c", false, <g><path d="M2 11H9V17H2Z" fill={LIGHT} stroke="none" /><path d="M10.500 14V3.500H17.500V8.500H10.500" /></g>],
  ["Dynamic input", "c", true, <g><path d="M7 3V11M3 7H11" /><path d="M8 12H18V16H8Z" fill="#fff" stroke="none" /></g>],
  ["Ortho", "c", true, <path d="M3.500 2V17.500H18M3 11.500H9.500V17" />],
  ["Polar", "a", false, <g><circle cx="9" cy="11" r="6" /><path d="M9 11H18M9 11L15 4M13 8V14" /></g>, true],
  ["Isometric drafting", "a", false, <g><path d="M10 2V18" stroke="#9cc9a0" /><path d="M3 4L17 17" /><circle cx="10" cy="10" r="1.500" /></g>, true],
  ["Object snap tracking", "d", true, <g><path d="M16 3L3 17H18" /><path d="M8 8L13 12M8 12L12 8" /></g>],
  ["Object snap", "b", true, <g><path d="M4.500 4.500H16.500V17.500H4.500Z" /><path d="M2.500 2.500H6.500V6.500H2.500Z" fill="#5b8fc7" /></g>, true],
  ["Lineweight", "b", false, <path d="M2 4H18M2 8H9M11 9H18M2 12H10M11 13H18M2 16H18" strokeWidth="2" />],
  [
    "Transparency",
    "c",
    true,
    <g>
      <path d="M2.500 2.500H17.500V17.500H2.500Z" />
      <path d="M4 5.500H16M4 11.500H16M7 8.500H16M7 14.500H16" strokeWidth="3" strokeDasharray="3 3" />
    </g>,
  ],
  ["Selection cycling", "b", false, <g><path d="M2 5H8M5 2V8M8 5H15" /><path d="M8 8H18V18H8Z" fill="#7fd69c" stroke="none" /></g>],
  ["3D object snap", "c", false, <g><path d="M5 7H14V15H8M5 7V12M5 7L8 3H17V11L14 15M14 7L17 3" /><path d="M2.500 12.500H6.500V16.500H2.500Z" stroke="#e57c7c" /></g>, true],
  ["Dynamic UCS", "c", true, <path d="M4.500 2V16.500H18M2 5L4.500 2L7 5M15 14L18 16.500L15 19M14 3L10 8H14L10 13" />],
  ["Selection filter", "b", false, <g><path d="M5 7H14V15H5ZM5 7L8 3H17V11L14 15M14 7L17 3" strokeDasharray="2 1" /><path d="M3 5H6V8H3ZM12 13H15V16H12ZM3 13H6V16H3Z" fill={BLUE} stroke="none" /></g>, true],
  ["Gizmo", "b", true, <g><path d="M10 5L16 8V14L10 17L4 14V8ZM10 1V11L4 14M10 11L16 14" /><circle cx="10" cy="11" r="2" /></g>, true],
  ["Annotation visibility", "d", true, <g><path d="M9 2L12 11L16 17L9 12L3 17L6 11Z" fill="#fff" stroke="none" /><circle cx="16" cy="5" r="2.500" /></g>],
  ["Auto scale", "b", false, <g><path d="M9 2L12 11L16 17L9 12L3 17L6 11Z" fill={LIGHT} stroke="none" /><path d="M16 1L13 5H17L14 9" /></g>],
  ["Annotation scale", "b", false, <path d="M9 2L12 11L16 17L9 12L3 17L6 11Z" fill={LIGHT} stroke="none" />],
];

function StatusBar() {
  return (
    <footer className="flex h-8 items-center border-t-4 border-[#3b4453] bg-[#222933] pb-[3px] pl-[14px] text-white">
      <Hamburger label="Layout menu" />
      <button
        type="button"
        className="ml-[10px] h-6 w-[66px] bg-[#3b4453] text-center text-xs font-bold [clip-path:polygon(9px_0,100%_0,calc(100%_-_9px)_100%,0_100%)]"
      >
        Model
      </button>
      <div className="ml-2 flex items-center whitespace-nowrap">
        <button type="button" className="mr-[9px] w-[42px]">Layout1</button>
        <Slash />
        <button type="button" className="mr-2 ml-[5px] w-[42px]">Layout2</button>
        <Slash />
        <div className="mx-[7px] flex"><PlusButton label="New layout" /></div>
        <Slash />
      </div>
      <div className="ml-auto flex h-[25px] items-center bg-[#343d4c] whitespace-nowrap">
        <span className="w-[152px] pl-3 text-xs text-[#c4c9d2]">30.1172, 10.6898, 0.0000</span>
        <button type="button" className="h-full w-[50px] border-x-2 border-[#262d39] text-xs">MODEL</button>
        {statusItems.map(([label, width, active, art, caret]) => (
          <React.Fragment key={label}>
            <button type="button" aria-label={label} aria-pressed={active} className={`flex justify-center ${W[width]}`}>
              <span className={`flex size-[22px] items-center justify-center ${active ? "bg-[#5b8fc7]" : ""}`}>
                <Icon>
                  <g stroke={active ? "#fff" : LIGHT}>{art}</g>
                </Icon>
              </span>
            </button>
            {caret && (
              <button type="button" aria-label={`${label} menu`} className="flex w-4 justify-center">
                <Caret w={8} />
              </button>
            )}
          </React.Fragment>
        ))}
        <button type="button" className="flex w-[74px] items-center justify-between pr-1 pl-[6px]">
          1:1 / 100%
          <Caret w={8} />
        </button>
        <button type="button" aria-label="Workspace" className="flex w-[26px] justify-center border-l border-[#262d39]">
          <Gear />
        </button>
        <button type="button" aria-label="Workspace menu" className="flex w-4 justify-center"><Caret w={8} /></button>
        <div className="flex w-[26px] justify-center border-x border-[#262d39]"><PlusButton label="Annotation monitor" /></div>
        <Icon w={20}>
          <path d="M9 2H15V4H12V6H15V8H12V10H15V12H12V14H15V17H9Z" fill={LIGHT} stroke="none" />
        </Icon>
        <div className="mr-[5px] flex"><Hamburger label="Customization" /></div>
      </div>
    </footer>
  );
}

function Taskbar() {
  return (
    <div className="flex h-[39px] items-center bg-[#434245] pr-[10px] pl-[14px] text-xs text-white">
      <button type="button" aria-label="Start menu" className="mr-[19px]">
        <Icon w={18}>
          <path d="M1 3.500L8 2.500V8.500H1ZM9 2.300L17 1V8.500H9ZM1 9.500H8V15.500L1 14.500ZM9 9.500H17V17L9 15.700Z" fill="#fff" stroke="none" />
        </Icon>
      </button>
      <button type="button" aria-label="AutoCAD" className="flex h-full w-[46px] items-center justify-center border-b-2 border-[#62b4e8] bg-[#68686b]">
        <span className="flex h-6 w-[21px] flex-col items-center rounded-sm bg-[#e5164f] leading-4 font-bold">
          A
          <span className="w-full bg-[#8a0d35] text-center text-[6px] leading-2">CAD</span>
        </span>
      </button>
      <button type="button" aria-label="Photos" className="ml-[6px] flex h-full w-10 items-center justify-center border-b-2 border-[#62b4e8]">
        <Icon w={22}>
          <path d="M.5 .5H21.500V21.500H.5Z" stroke="#fff" />
          <path d="M1 21V13L7 6L13 14L15 9L21 17V21Z" fill="#fff" stroke="none" />
        </Icon>
      </button>
      <div className="ml-auto flex items-center gap-3">
        <button type="button" aria-label="Show hidden icons">
          <Icon w={12} h={8}><path d="M1 7L6 2L11 7" stroke="#fff" strokeWidth="1.500" /></Icon>
        </button>
        <span>ENG</span>
      </div>
    </div>
  );
}

function ChannelBadge() {
  return (
    <svg
      width="104"
      height="112"
      viewBox="0 0 104 112"
      className="pointer-events-none absolute top-[20px] right-[16px] overflow-visible"
      role="img"
      aria-label="نیک درس"
    >
      <g stroke="#fff" strokeWidth="1.500" strokeLinejoin="round">
        <path d="M52 52L17 18L30 21L52 44L74 21L89 18Z" fill="#66d3d1" />
        <path d="M52 50L28 15Q44 19 52 36Q60 19 77 15Z" fill="#53bfd0" />
        <path d="M5 26Q37 28 52 48Q68 28 98 26L86 54Q66 46 52 50Q38 46 20 56Z" fill="#3aa6cb" />
        <path d="M11 32Q38 33 52 49Q66 33 93 32L84 54Q66 46 52 49Q38 46 20 56Z" fill="#fff" />
        <path d="M45 45V20L52 4L59 20V45L52 49Z" fill="#55c6da" />
        <path d="M45 20L52 4L59 20Z" fill="#f5b13d" />
        <path d="M49 11L52 4L55 11Z" fill="#26313d" />
        <path d="M3 62Q22 46 52 48Q82 47 101 62Q76 53 52 55Q26 54 3 62Z" fill="#f5b13d" />
      </g>
      <path d="M24 37Q38 38 48 48M82 37Q67 38 56 48M24 45Q35 43 44 49M80 45Q69 43 60 49" fill="none" stroke="#c3c7cc" />
      <g
        textAnchor="middle"
        fontFamily="DejaVu Sans, sans-serif"
        fontWeight="bold"
        fill="#3f9dc4"
        stroke="#fff"
        strokeWidth="4"
        strokeLinejoin="round"
        paintOrder="stroke"
      >
        <text x="51" y="78" fontSize="18">نیک درس</text>
        <text x="51" y="103" fontSize="16" fill="#6fa9b8">پیش نمایش</text>
      </g>
    </svg>
  );
}

export default function App() {
  return (
    <div className="relative flex min-h-screen w-full flex-col overflow-hidden border border-[#2b92ac] bg-[#212830] font-['Noto_Sans','DejaVu_Sans',sans-serif] text-[11px]">
      <TitleBar />
      <RibbonTabs />
      <Ribbon />
      <FileTabs />
      <Viewport />
      <StatusBar />
      <Taskbar />
      <ChannelBadge />
    </div>
  );
}
